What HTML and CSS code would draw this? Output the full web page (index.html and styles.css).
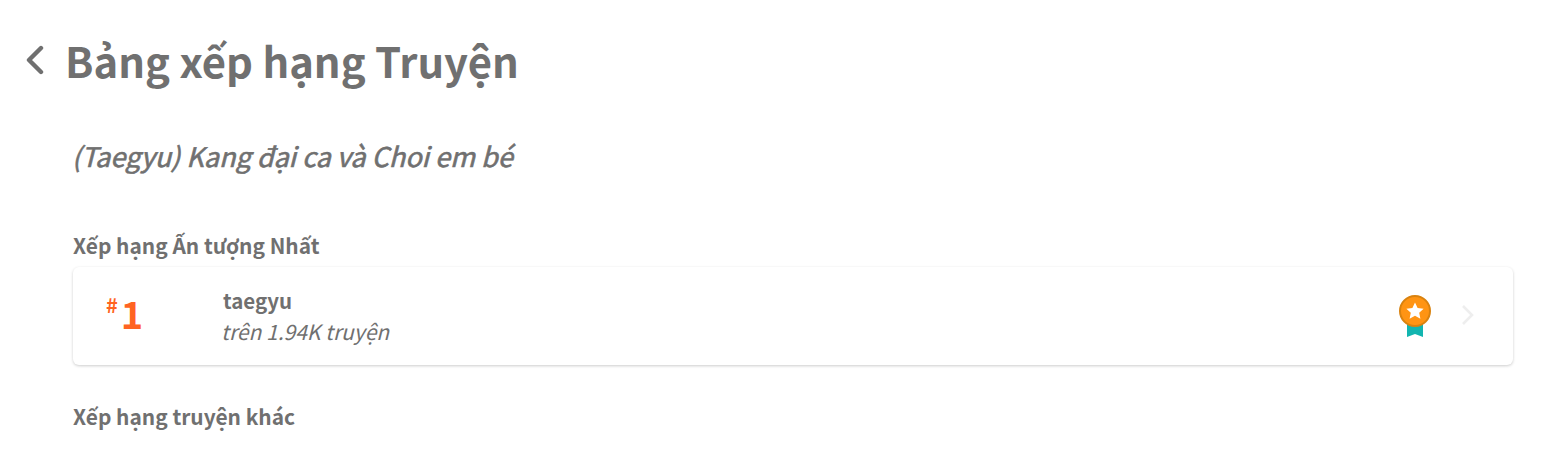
FILE: index.html
```html
<!DOCTYPE html>
<html lang="vi">
<head>
    <meta charset="UTF-8">
    <meta name="viewport" content="width=device-width, initial-scale=1.0">
    <title>Bảng xếp hạng Truyện</title>
    <link rel="stylesheet" href="styles.css">
</head>
<body>
    <header class="page-head">
        <svg class="back-icon" viewBox="0 0 20 32" width="20" height="32">
            <path d="M17 4 L5 16 L17 28" fill="none" stroke="#707070" stroke-width="4.4" stroke-linecap="round" stroke-linejoin="round"/>
        </svg>
        <h1>Bảng xếp hạng Truyện</h1>
    </header>

    <main class="content">
        <h2 class="story-title">(Taegyu) Kang đại ca và Choi em bé</h2>

        <h3 class="section-title">Xếp hạng Ấn tượng Nhất</h3>
        <div class="rank-card">
            <div class="rank-num"><span class="hash">#</span><span class="num">1</span></div>
            <div class="rank-info">
                <div class="tag-name">taegyu</div>
                <div class="tag-sub">trên 1.94K truyện</div>
            </div>
            <svg class="medal" viewBox="0 0 34 44" width="34" height="44">
                <path d="M9 26 H25 V43 L17 40 L9 43 Z" fill="#12b5b0"/>
                <circle cx="17" cy="17" r="15" fill="#ff9413" stroke="#d9820f" stroke-width="2"/>
                <path d="M17 8.5 L19.6 14 L25.6 14.7 L21.2 18.8 L22.4 24.7 L17 21.8 L11.6 24.7 L12.8 18.8 L8.4 14.7 L14.4 14 Z" fill="#fff"/>
            </svg>
            <svg class="chevron" viewBox="0 0 14 22" width="14" height="22">
                <path d="M2 2 L11 11 L2 20" fill="none" stroke="#eeeeee" stroke-width="2.6"/>
            </svg>
        </div>

        <h3 class="section-title section-other">Xếp hạng truyện khác</h3>
    </main>
</body>
</html>
```

FILE: styles.css
```css
body {
    font-family: "Noto Sans CJK SC", "Noto Sans", sans-serif;
    color: #707070;
    background: #fff;
    margin: 0;
    overflow: hidden;
}
.page-head {
    display: flex;
    align-items: center;
    height: 60px;
    margin-top: 30px;
    padding-left: 24px;
}
.back-icon {
    margin-right: 21px;
}
h1 {
    font-size: 41.8px;
    font-weight: 700;
    line-height: 60px;
    margin: 0;
}
.content {
    padding: 0 39px 0 73px;
}
.story-title {
    font-size: 27px;
    font-style: italic;
    font-weight: 400;
    line-height: 40px;
    margin: 46px 0 0 -1px;
    -webkit-text-stroke: 0.6px #707070;
}
.section-title {
    font-size: 20.9px;
    font-weight: 700;
    line-height: 30px;
    margin: 0;
}
.story-title + .section-title {
    margin-top: 54px;
}
.section-other {
    margin-top: 36px;
}
.rank-card {
    display: flex;
    align-items: center;
    height: 98px;
    margin-top: 7px;
    background: #fff;
    border-radius: 6px;
    box-shadow: 0 1px 3px rgba(0, 0, 0, 0.2);
}
.rank-num {
    display: flex;
    align-items: flex-start;
    width: 150px;
    height: 50px;
    padding-left: 33px;
    box-sizing: border-box;
    color: #ff6422;
}
.hash {
    font-size: 20px;
    font-weight: 700;
    line-height: 28px;
    margin-right: 4px;
}
.num {
    font-size: 38px;
    font-weight: 700;
    line-height: 44px;
    margin-left: -1px;
}
.rank-info {
    flex: 1;
    padding-bottom: 2px;
}
.tag-name {
    font-size: 20.5px;
    font-weight: 700;
    line-height: 30px;
}
.tag-sub {
    font-size: 21px;
    font-style: italic;
    line-height: 30px;
    margin: 1px 0 0 -2px;
}
.medal {
    margin-right: 29px;
}
.chevron {
    margin: 0 38px 3px 0;
}
```
